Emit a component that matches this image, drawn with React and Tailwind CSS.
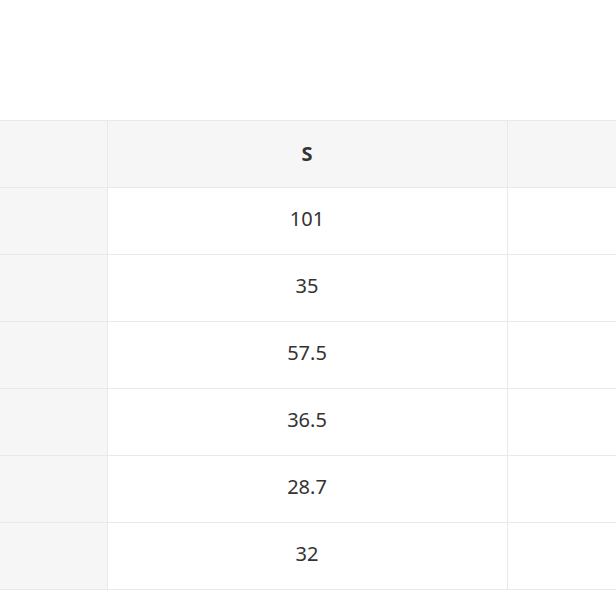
const rows = ['101', '35', '57.5', '36.5', '28.7', '32'];

export default function App() {
  return (
    <div className="w-[616px] h-[616px] overflow-hidden bg-white font-['Noto_Sans',sans-serif] text-[#333]">
      <div className="pt-[120px]">
        <table className="border-collapse table-fixed w-[700px]">
          <colgroup>
            <col className="w-[107px]" />
            <col className="w-[400px]" />
            <col />
          </colgroup>
          <thead>
            <tr className="h-[67px]">
              <th className="border-y border-[#e9e9e9] bg-[#f6f6f6]"></th>
              <th className="border border-[#e9e9e9] bg-[#f6f6f6] text-[20px] font-bold">S</th>
              <th className="border border-[#e9e9e9] bg-[#f6f6f6]"></th>
            </tr>
          </thead>
          <tbody>
            {rows.map(v => (
              <tr key={v} className="h-[67px]">
                <td className="border-y border-[#e9e9e9] bg-[#f6f6f6]"></td>
                <td className="border border-[#e9e9e9] text-center text-[20px] pb-[4px]">{v}</td>
                <td className="border border-[#e9e9e9]"></td>
              </tr>
            ))}
          </tbody>
        </table>
      </div>
    </div>
  );
}
